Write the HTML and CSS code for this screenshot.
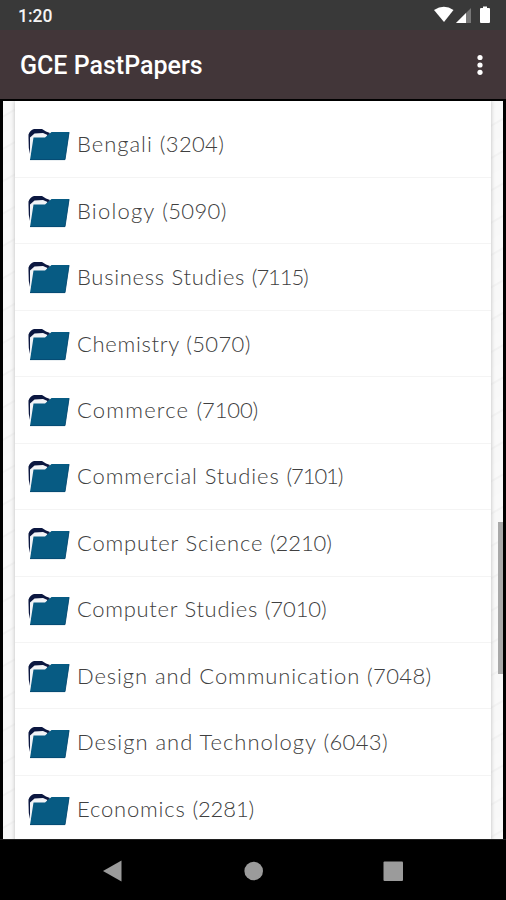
FILE: index.html
```
<!DOCTYPE html>
<html lang="en">
<head>
<meta charset="utf-8">
<title>GCE PastPapers</title>
<link rel="stylesheet" href="styles.css">
</head>
<body>
<svg class="defs" width="0" height="0" aria-hidden="true">
  <symbol id="folder" viewBox="0 0 42 34">
    <path d="M.5 10V6.500Q2 2 6 1h8l4 2.500 4 1.500-2 3-15 3-3 15L.8 20z" fill="#0b1740"/>
    <path d="M2 24V9.500L6.500 5.500 15 5l4.500 2L17 11H7L3 28z" fill="#f2f4f7"/>
    <path d="M2 32 5.500 9.500H17L23.500 4h17.800L37 32z" fill="#075b83"/>
    <path d="M2 31.600h35L41 4.500" fill="none" stroke="#064a72" stroke-width=".9"/>
  </symbol>
</svg>
<header class="status">
  <span class="time">1:20</span>
  <svg class="signals" width="60" height="20" viewBox="0 0 60 20">
    <path d="M0 5Q10-1.500 19.500 5L10 17z" fill="#fff"/>
    <path d="M37 3v15H22z" fill="#777"/>
    <path d="M32 8v10H22z" fill="#fff"/>
    <path d="M47 3h2V1.500h4V3h2q1 0 1 1v13q0 1-1 1h-8q-1 0-1-1V4q0-1 1-1z" fill="#fff"/>
  </svg>
</header>
<div class="appbar">
  <h1>GCE PastPapers</h1>
  <svg class="more" width="8" height="22" viewBox="0 0 8 22" fill="#fff">
    <circle cx="4" cy="3.500" r="2.600"/><circle cx="4" cy="11" r="2.600"/><circle cx="4" cy="18.300" r="2.600"/>
  </svg>
</div>
<main class="viewport">
  <ul class="list">
    <li><svg class="folder"><use href="#folder"/></svg><span class="name loose">Bengali <span class="code">(3204)</span></span></li>
    <li><svg class="folder"><use href="#folder"/></svg><span class="name wide">Biology <span class="code">(5090)</span></span></li>
    <li><svg class="folder"><use href="#folder"/></svg><span class="name tight">Business Studies <span class="code narrow">(7115)</span></span></li>
    <li><svg class="folder"><use href="#folder"/></svg><span class="name tight">Chemistry <span class="code">(5070)</span></span></li>
    <li><svg class="folder"><use href="#folder"/></svg><span class="name wide">Commerce <span class="code medium">(7100)</span></span></li>
    <li><svg class="folder"><use href="#folder"/></svg><span class="name">Commercial Studies <span class="code narrow">(7101)</span></span></li>
    <li><svg class="folder"><use href="#folder"/></svg><span class="name snug">Computer Science <span class="code medium">(2210)</span></span></li>
    <li><svg class="folder"><use href="#folder"/></svg><span class="name tight">Computer Studies <span class="code medium">(7010)</span></span></li>
    <li><svg class="folder"><use href="#folder"/></svg><span class="name">Design and Communication <span class="code">(7048)</span></span></li>
    <li><svg class="folder"><use href="#folder"/></svg><span class="name loose">Design and Technology <span class="code">(6043)</span></span></li>
    <li><svg class="folder"><use href="#folder"/></svg><span class="name snug">Economics <span class="code medium">(2281)</span></span></li>
  </ul>
  <div class="scrollbar"></div>
</main>
<nav class="navbar">
  <svg width="506" height="60" viewBox="0 0 506 60" fill="#9b9b9b">
    <path d="M103 31 121.500 20.500v21z"/><circle cx="253.700" cy="31" r="9.300"/><rect x="383.500" y="21.500" width="19.500" height="19.500" rx="1"/>
  </svg>
</nav>
</body>
</html>
```
FILE: styles.css
```
* { box-sizing: border-box; }
body {
  margin: 0;
  width: 506px;
  height: 900px;
  display: flex;
  flex-direction: column;
  overflow: hidden;
  background: #000;
  font-family: Roboto, sans-serif;
}
.defs { position: absolute; }
.status {
  height: 30px;
  padding: 5px 13px 0 18px;
  display: flex;
  justify-content: space-between;
  background: #393939;
  color: #f4f4f4;
}
.time { font-size: 17.500px; font-weight: 500; line-height: 22px; }
.signals { margin-right: -1px; }
.appbar {
  height: 69px;
  padding: 0 22px 0 20px;
  display: flex;
  align-items: center;
  justify-content: space-between;
  background: #423639;
}
h1 { margin: 2px 0 0; color: #fff; font-size: 25px; font-weight: 500; line-height: 30px; }
.more { margin-top: 0; }
.viewport {
  position: relative;
  height: 738px;
  margin: 2px 3px 0;
  padding: 0 12px;
  background: repeating-linear-gradient(150deg, #f9f9f9 0 12px, #f2f2f2 13px 14px, #f8f8f8 15px 28px);
  overflow: hidden;
}
.list {
  margin: 0;
  padding: 10.500px 0 0;
  height: 760px;
  list-style: none;
  background: #fff;
  box-shadow: 0 0 4px #bbb;
}
li {
  height: 66.450px;
  padding: 0 0 0 13px;
  display: flex;
  align-items: center;
  border-bottom: 1px solid #f4f4f4;
}
.folder { width: 42px; height: 34px; flex: none; margin-top: 2px; }
.name {
  margin: 0 0 0 7px;
  white-space: nowrap;
  font: 300 22px/30px Lato, sans-serif;
  letter-spacing: 0.900px;
  color: #404040;
}
.tight { letter-spacing: 0.700px; }
.snug { letter-spacing: 0.810px; }
.loose { letter-spacing: 0.980px; }
.wide { letter-spacing: 1.200px; }
.code { letter-spacing: 0.350px; }
.medium { letter-spacing: -0.100px; }
.narrow { letter-spacing: -1.100px; }
.scrollbar {
  position: absolute;
  top: 421px;
  right: 0;
  width: 5px;
  height: 152px;
  background: #a9a9a9;
}
.navbar { height: 61px; border-top: 1px solid #202020; }
.navbar svg { display: block; }
```
